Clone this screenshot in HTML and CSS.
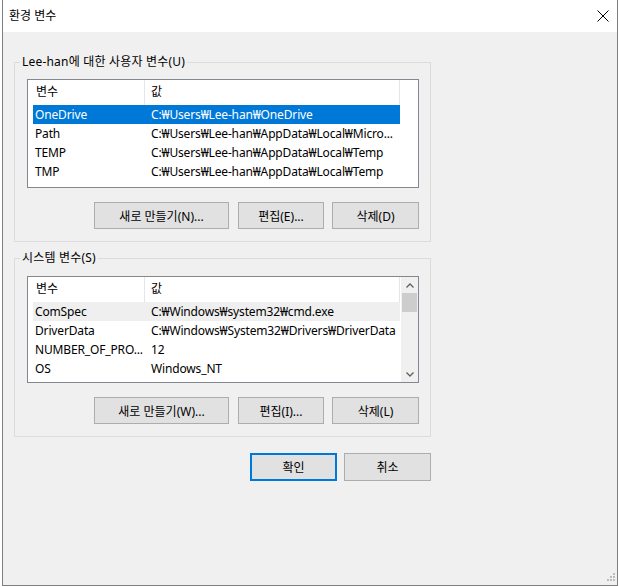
FILE: index.html
```html
<!DOCTYPE html>
<html lang="ko">
<head>
<meta charset="utf-8">
<title>환경 변수</title>
<link rel="stylesheet" href="styles.css">
</head>
<body>
<div class="window">
  <div class="titlebar">
    <span class="title">환경 변수</span>
    <svg class="close" width="12" height="12" viewBox="0 0 12 12"><path d="M0.5 0.5 L11.5 11.5 M11.5 0.5 L0.5 11.5" stroke="#000" stroke-width="1" fill="none"/></svg>
  </div>
  <div class="content">
    <fieldset class="group g1">
      <legend>Lee-han에 대한 사용자 변수(U)</legend>
      <div class="list l1">
        <div class="table">
          <div class="row head"><div class="c1">변수</div><div class="c2">값</div></div>
          <div class="row sel"><div class="c1">OneDrive</div><div class="c2">C:₩Users₩Lee-han₩OneDrive</div></div>
          <div class="row"><div class="c1">Path</div><div class="c2">C:₩Users₩Lee-han₩AppData₩Local₩Micro...</div></div>
          <div class="row"><div class="c1">TEMP</div><div class="c2">C:₩Users₩Lee-han₩AppData₩Local₩Temp</div></div>
          <div class="row"><div class="c1">TMP</div><div class="c2">C:₩Users₩Lee-han₩AppData₩Local₩Temp</div></div>
        </div>
      </div>
      <div class="btns">
        <button class="btn wide">새로 만들기(N)...</button>
        <button class="btn mid">편집(E)...</button>
        <button class="btn last">삭제(D)</button>
      </div>
    </fieldset>
    <fieldset class="group g2">
      <legend>시스템 변수(S)</legend>
      <div class="list l2">
        <div class="table">
          <div class="row head"><div class="c1">변수</div><div class="c2">값</div></div>
          <div class="row inactive"><div class="c1">ComSpec</div><div class="c2">C:₩Windows₩system32₩cmd.exe</div></div>
          <div class="row"><div class="c1">DriverData</div><div class="c2">C:₩Windows₩System32₩Drivers₩DriverData</div></div>
          <div class="row"><div class="c1">NUMBER_OF_PRO...</div><div class="c2">12</div></div>
          <div class="row"><div class="c1">OS</div><div class="c2">Windows_NT</div></div>
        </div>
        <div class="scrollbar">
          <div class="arrow"><svg width="8" height="5" viewBox="0 0 8 5"><path d="M0.5 4.5 L4 1 L7.5 4.5" stroke="#606060" stroke-width="1.3" fill="none"/></svg></div>
          <div class="thumb"></div>
          <div class="track"></div>
          <div class="arrow"><svg width="8" height="5" viewBox="0 0 8 5"><path d="M0.5 0.5 L4 4 L7.5 0.5" stroke="#606060" stroke-width="1.3" fill="none"/></svg></div>
        </div>
      </div>
      <div class="btns">
        <button class="btn wide">새로 만들기(W)...</button>
        <button class="btn mid">편집(I)...</button>
        <button class="btn last">삭제(L)</button>
      </div>
    </fieldset>
    <div class="dlg-btns">
      <button class="btn ok">확인</button>
      <button class="btn cancel">취소</button>
    </div>
  </div>
  <div class="grip">
    <span class="dot d1"></span><span class="dot d2"></span><span class="dot d3"></span>
    <span class="dot d4"></span><span class="dot d5"></span><span class="dot d6"></span>
  </div>
</div>
</body>
</html>
```
FILE: styles.css
```css
* { box-sizing: border-box; }
html, body { margin: 0; padding: 0; background: #ffffff; }
body {
  font-family: "Noto Sans", "Noto Sans CJK KR", sans-serif;
  font-size: 12px;
  color: #000;
}
.window {
  position: relative;
  margin-left: 2px;
  width: 616px;
  height: 586px;
  border: 1px solid #7f7f7f;
  border-top: none;
  background: #f0f0f0;
}
.titlebar {
  height: 32px;
  background: #fff;
  display: flex;
  align-items: center;
  justify-content: space-between;
  padding-left: 6px;
  padding-right: 8px;
}
.title { font-size: 12px; line-height: 16px; }
.close { display: block; }
.content { padding-top: 22px; }
.group {
  margin: 0 0 0 11px;
  width: 417px;
  min-width: 0;
  border: 1px solid #dcdcdc;
  padding: 9px 11px 12px 12px;
}
.group legend {
  padding: 0 2px;
  margin-left: -7px;
  line-height: 16px;
  font-size: 12px;
  letter-spacing: 0.2px;
}
.g2 { margin-top: 8px; padding-top: 10px; }
.list {
  width: 392px;
  border: 1px solid #828790;
  background: #fff;
  overflow: hidden;
  display: flex;
}
.l1 { height: 109px; }
.l2 { height: 107px; }
.table {
  flex: 1;
  padding-left: 5px;
  overflow: hidden;
}
.row {
  display: flex;
  height: 19px;
  line-height: 19px;
  width: 367px;
  letter-spacing: -0.15px;
}
.row.head { height: 25px; line-height: 24px; letter-spacing: 0; }
.row.head .c1, .row.head .c2 { border-right: 1px solid #e5e5e5; }
.c1 {
  width: 112px;
  padding-left: 2px;
  white-space: nowrap;
  overflow: hidden;
  flex: none;
}
.c2 {
  width: 255px;
  padding-left: 6px;
  white-space: nowrap;
  overflow: hidden;
  flex: none;
}
.row.head .c1 { padding-left: 3px; }
.row.sel { background: #0078d7; color: #fff; }
.row.inactive { background: #efefef; }
.scrollbar {
  width: 17px;
  flex: none;
  background: #f0f0f0;
  display: flex;
  flex-direction: column;
}
.arrow {
  height: 16px;
  display: flex;
  align-items: center;
  justify-content: center;
  flex: none;
}
.arrow svg { display: block; }
.thumb {
  height: 19px;
  margin: 0 1px;
  background: #cdcdcd;
  flex: none;
}
.track { flex: 1; }
.btns {
  display: flex;
  justify-content: flex-end;
  margin-top: 14px;
  width: 392px;
}
.btn {
  height: 27px;
  background: #e1e1e1;
  border: 1px solid #adadad;
  font-family: "Noto Sans", "Noto Sans CJK KR", sans-serif;
  font-size: 12px;
  color: #000;
  padding: 0;
  margin: 0;
}
.btn.wide { width: 135px; }
.btn.mid { width: 86px; margin-left: 9px; }
.btn.last { width: 87px; margin-left: 8px; }
.dlg-btns {
  display: flex;
  justify-content: flex-end;
  margin-left: 11px;
  width: 417px;
  margin-top: 16px;
}
.btn.ok, .btn.cancel { width: 87px; height: 28px; }
.btn.ok { border: 2px solid #0078d7; }
.btn.cancel { margin-left: 7px; }
.grip {
  position: absolute;
  right: 0;
  bottom: 0;
  width: 12px;
  height: 12px;
}
.dot {
  position: absolute;
  width: 2px;
  height: 2px;
  background: #bcbcbc;
}
.d1 { left: 8px; top: 0px; }
.d2 { left: 5px; top: 3px; }
.d3 { left: 8px; top: 3px; }
.d4 { left: 2px; top: 6px; }
.d5 { left: 5px; top: 6px; }
.d6 { left: 8px; top: 6px; }
```
